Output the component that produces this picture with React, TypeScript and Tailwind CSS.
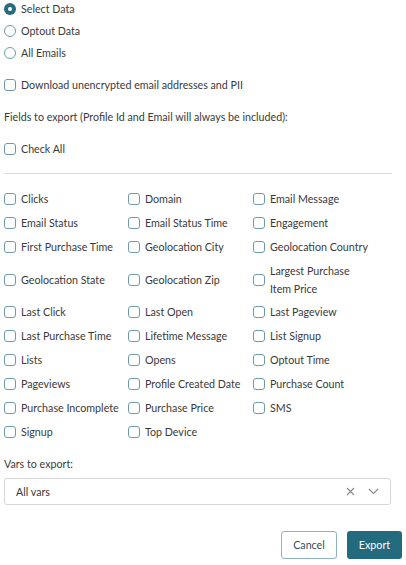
import React from "react";

const fields: string[][] = [
  ["Clicks", "Domain", "Email Message"],
  ["Email Status", "Email Status Time", "Engagement"],
  ["First Purchase Time", "Geolocation City", "Geolocation Country"],
  ["Geolocation State", "Geolocation Zip", "Largest Purchase Item Price"],
  ["Last Click", "Last Open", "Last Pageview"],
  ["Last Purchase Time", "Lifetime Message", "List Signup"],
  ["Lists", "Opens", "Optout Time"],
  ["Pageviews", "Profile Created Date", "Purchase Count"],
  ["Purchase Incomplete", "Purchase Price", "SMS"],
  ["Signup", "Top Device", ""],
];

function Box() {
  return <span className="w-[12px] h-[12px] shrink-0 rounded-[3px] border border-[#6f9aab] bg-white" />;
}

function Radio({ checked }: { checked?: boolean }) {
  return checked ? (
    <span className="w-[12px] h-[12px] shrink-0 rounded-full bg-[#276b7f] flex items-center justify-center">
      <span className="w-[4px] h-[4px] rounded-full bg-white" />
    </span>
  ) : (
    <span className="w-[12px] h-[12px] shrink-0 rounded-full border border-[#6f9aab] bg-white" />
  );
}

export default function App() {
  return (
    <div
      className="w-[406px] h-[565px] bg-white text-[#3a3a3a] text-[10.7px] leading-[18px] pl-[4px] pr-[4px] overflow-hidden"
      style={{ fontFamily: "Lato, 'Open Sans', sans-serif" }}
    >
      <div className="flex flex-col gap-[4px]">
        {[
          ["Select Data", true],
          ["Optout Data", false],
          ["All Emails", false],
        ].map(([l, c]) => (
          <label key={l as string} className="flex items-center gap-[5px] h-[18px]">
            <Radio checked={c as boolean} />
            <span>{l as string}</span>
          </label>
        ))}
      </div>
      <label className="flex items-center gap-[5px] h-[18px] mt-[14px]">
        <Box />
        <span>Download unencrypted email addresses and PII</span>
      </label>
      <div className="mt-[14px] h-[18px]">Fields to export (Profile Id and Email will always be included):</div>
      <label className="flex items-center gap-[5px] h-[18px] mt-[14px]">
        <Box />
        <span>Check All</span>
      </label>
      <div className="mt-[15px] mr-[10px] border-t border-[#dcdcdc]" />
      <div className="mt-[16px] grid grid-cols-[124px_125px_1fr] gap-y-[6px]">
        {fields.flat().map((f, i) =>
          f ? (
            <label key={i} className="flex items-center gap-[5px]">
              <Box />
              {f === "Largest Purchase Item Price" ? (
                <span className="leading-[17.5px]">
                  Largest Purchase
                  <br />
                  Item Price
                </span>
              ) : (
                <span className="whitespace-nowrap">{f}</span>
              )}
            </label>
          ) : (
            <div key={i} />
          )
        )}
      </div>
      <div className="mt-[14px] h-[18px]">Vars to export:</div>
      <div className="mt-[5px] mr-[11px] h-[27px] border border-[#d6d6d6] rounded-[3px] flex items-center pl-[11px] pr-[11px]">
        <span className="flex-1">All vars</span>
        <svg width="9" height="9" viewBox="0 0 9 9" className="mr-[13px]">
          <path d="M1 1 L8 8 M8 1 L1 8" stroke="#8a8a8a" strokeWidth="1.1" />
        </svg>
        <svg width="11" height="7" viewBox="0 0 11 7">
          <path d="M1 1 L5.5 5.5 L10 1" stroke="#8a8a8a" strokeWidth="1.1" fill="none" />
        </svg>
      </div>
      <div className="mt-[26px] flex justify-end gap-[10px]">
        <button className="w-[56px] h-[28px] rounded-[3px] border border-[#8fb3c0] bg-white text-[#2f4f5a]">Cancel</button>
        <button className="w-[55px] h-[28px] rounded-[3px] bg-[#246a7e] text-white">Export</button>
      </div>
    </div>
  );
}
